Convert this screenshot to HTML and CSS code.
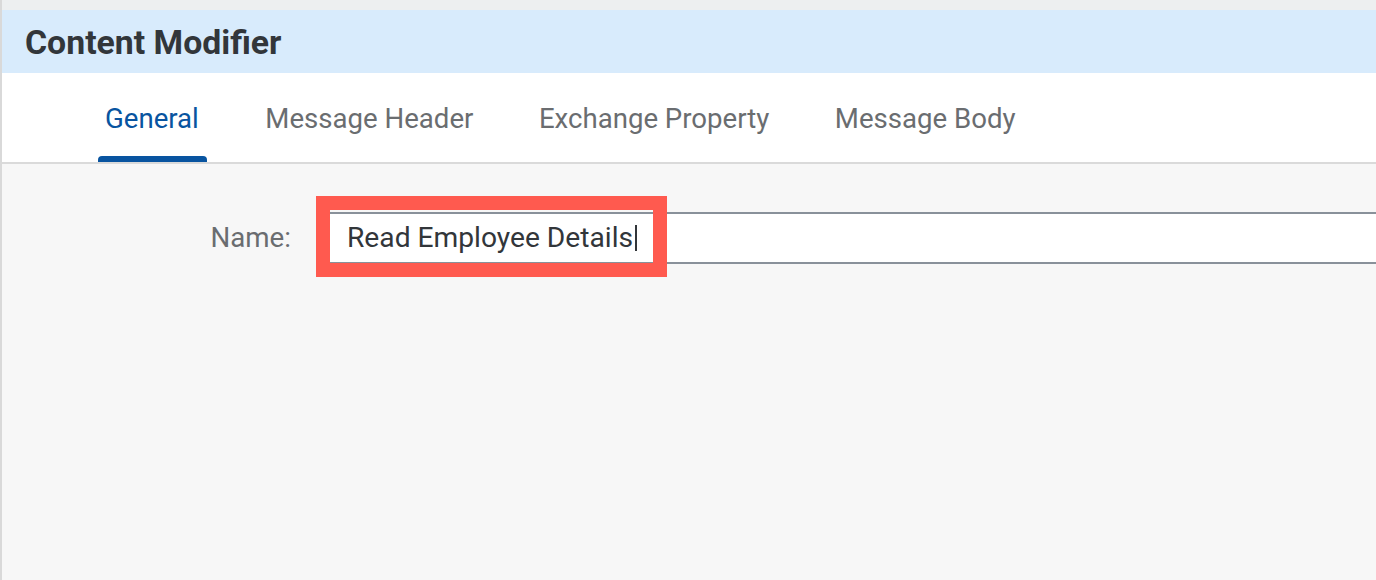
FILE: index.html
```html
<!DOCTYPE html>
<html lang="en">
<head>
<meta charset="utf-8">
<title>Content Modifier</title>
<link rel="stylesheet" href="styles.css">
</head>
<body>
<div class="app">
  <div class="top-strip"></div>
  <header class="header">
    <h1 class="title">Content Modifier</h1>
  </header>
  <nav class="tabs">
    <div class="tab active">
      <span class="tab-label">General</span>
      <span class="tab-indicator"></span>
    </div>
    <div class="tab">
      <span class="tab-label">Message Header</span>
      <span class="tab-indicator"></span>
    </div>
    <div class="tab">
      <span class="tab-label">Exchange Property</span>
      <span class="tab-indicator"></span>
    </div>
    <div class="tab">
      <span class="tab-label">Message Body</span>
      <span class="tab-indicator"></span>
    </div>
  </nav>
  <main class="content">
    <div class="form-row">
      <label class="form-label">Name:</label>
      <div class="input">
        <span class="input-text">Read Employee Details</span><span class="caret"></span>
      </div>
    </div>
  </main>
  <div class="highlight"></div>
</div>
</body>
</html>
```

FILE: styles.css
```css
* {
  box-sizing: border-box;
}

html, body {
  margin: 0;
  padding: 0;
  height: 100%;
  overflow: hidden;
}

body {
  font-family: Roboto, "Noto Sans", "Liberation Sans", sans-serif;
  background: #f7f7f7;
}

.app {
  position: relative;
  height: 100vh;
  display: flex;
  flex-direction: column;
  border-left: 2px solid #d9d9d9;
}

.top-strip {
  height: 10px;
  background: #edeff0;
  flex: none;
}

.header {
  flex: none;
  height: 63px;
  background: #d8ebfc;
  padding: 13px 0 0 23px;
}

.title {
  margin: 0;
  font-size: 33.8px;
  line-height: 40px;
  font-weight: 700;
  color: #32363a;
}

.tabs {
  flex: none;
  height: 91px;
  background: #ffffff;
  border-bottom: 2px solid #dadada;
  display: flex;
  gap: 51.5px;
  padding-left: 96px;
}

.tab {
  display: flex;
  flex-direction: column;
  padding-top: 30px;
}

.tab-label {
  flex: 1;
  padding: 0 7px;
  font-size: 27.6px;
  line-height: 32px;
  color: #6a6d70;
  white-space: nowrap;
}

.tab-indicator {
  height: 6px;
  border-radius: 4px 4px 0 0;
  background: transparent;
}

.tab.active .tab-label {
  padding: 0 8px 0 7px;
  color: #0854a0;
}

.tab.active .tab-indicator {
  background: #0854a0;
}

.content {
  flex: 1;
  background: #f7f7f7;
  padding-top: 48px;
}

.form-row {
  display: flex;
  align-items: center;
  gap: 36px;
}

.form-label {
  width: 289px;
  text-align: right;
  font-size: 27.7px;
  line-height: 32px;
  color: #6a6d70;
  flex: none;
}

.input {
  flex: 1;
  height: 52px;
  background: #ffffff;
  border: 2px solid #89919a;
  border-right: none;
  padding-left: 18px;
  display: flex;
  align-items: center;
}

.input-text {
  font-size: 28.2px;
  line-height: 32px;
  color: #32363a;
  white-space: nowrap;
}

.caret {
  display: inline-block;
  width: 1.5px;
  height: 26px;
  margin-left: 2px;
  background: #32363a;
}

.highlight {
  position: absolute;
  left: 314px;
  top: 196px;
  width: 351px;
  height: 81px;
  border: 14px solid #ff5a4f;
}
```
